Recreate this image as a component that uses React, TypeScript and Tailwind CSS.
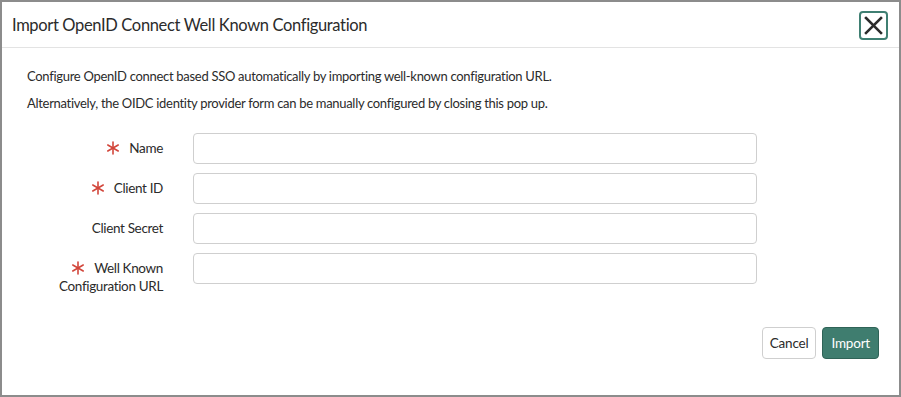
import React from "react";

function Req() {
  return (
    <svg width="14" height="14" viewBox="0 0 14 14" className="inline-block align-[-2px] mr-[9px]">
      <g stroke="#d2463b" strokeWidth="1.6" strokeLinecap="round">
        <line x1="7" y1="1" x2="7" y2="13" />
        <line x1="1.8" y1="4" x2="12.2" y2="10" />
        <line x1="1.8" y1="10" x2="12.2" y2="4" />
      </g>
    </svg>
  );
}

function Row({ first, second, required }: { first: string; second?: string; required?: boolean }) {
  return (
    <div className="flex items-start">
      <div className="w-[136px] pt-[6px] text-right text-[13.5px] leading-[18px] tracking-[-0.35px] text-[#2b2b2b]">
        <div>
          {required && <Req />}
          {first}
        </div>
        {second && <div>{second}</div>}
      </div>
      <input className="ml-[30px] w-[564px] h-[31px] border border-[#cfcfcf] rounded-[4px] bg-white outline-none" />
    </div>
  );
}

export default function App() {
  return (
    <div
      className="w-[901px] h-[397px] border-2 border-[#8c8c8c] bg-white flex flex-col"
      style={{ fontFamily: "Lato, 'Noto Sans', sans-serif" }}
    >
      <div className="h-[46px] shrink-0 border-b border-[#e3e3e3] flex items-center justify-between pl-[10px] pr-[11px]">
        <div className="text-[16.5px] tracking-[-0.35px] text-[#2b2b2b] pt-[1px]">Import OpenID Connect Well Known Configuration</div>
        <button className="w-[29px] h-[29px] border-2 border-[#3f7f72] rounded-[4px] flex items-center justify-center mt-[1px]">
          <svg width="19" height="19" viewBox="0 0 19 19">
            <g stroke="#2b2b2b" strokeWidth="2.6" strokeLinecap="square">
              <line x1="2" y1="2" x2="17" y2="17" />
              <line x1="17" y1="2" x2="2" y2="17" />
            </g>
          </svg>
        </button>
      </div>
      <div className="pl-[25px] pt-[19px] text-[13px] tracking-[-0.3px] text-[#2b2b2b] leading-[18px]">
        <div>Configure OpenID connect based SSO automatically by importing well-known configuration URL.</div>
        <div className="mt-[9px]">Alternatively, the OIDC identity provider form can be manually configured by closing this pop up.</div>
      </div>
      <div className="pl-[25px] pt-[21px] flex flex-col gap-[9px]">
        <Row first="Name" required />
        <Row first="Client ID" required />
        <Row first="Client Secret" />
        <Row first="Well Known" second="Configuration URL" required />
      </div>
      <div className="flex-1" />
      <div className="flex justify-end gap-[6px] pr-[20px] pb-[36px]">
        <button className="h-[32px] px-[7px] border border-[#cfcfcf] rounded-[4px] bg-white text-[13.5px] tracking-[-0.2px] text-[#2b2b2b]">Cancel</button>
        <button className="h-[32px] px-[8px] border border-[#2f6357] rounded-[4px] bg-[#3f7d6f] text-[13.5px] tracking-[-0.2px] text-white">Import</button>
      </div>
    </div>
  );
}
